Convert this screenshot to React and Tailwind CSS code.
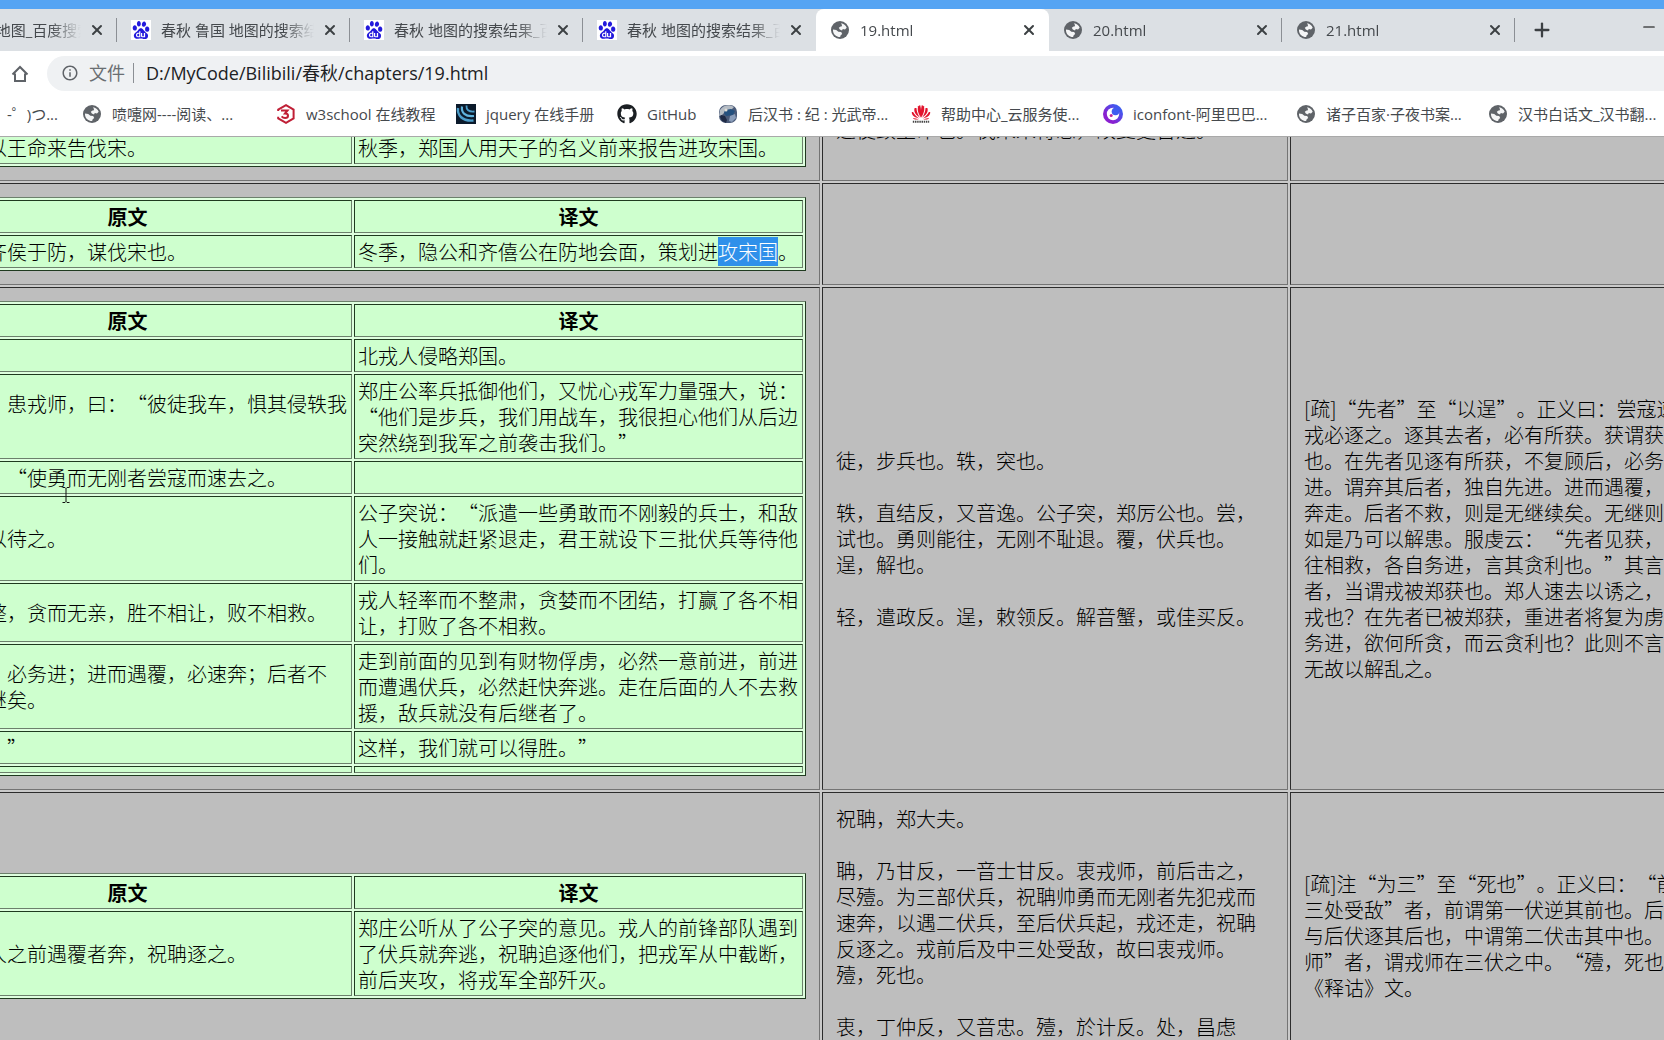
import { Fragment } from 'react'
import { SiBaidu } from 'react-icons/si'
import { FaGithub } from 'react-icons/fa'
import { MdInfoOutline } from 'react-icons/md'
import { X, Plus, Minus } from 'lucide-react'

const BaiduIcon = () => (
    <span className="flex h-5 w-5 shrink-0 items-center justify-center bg-white">
        <SiBaidu className="h-[18px] w-[18px] text-[#2319dc]" />
    </span>
)

const GlobeIcon = () => (
    <svg viewBox="0 0 20 20" className="h-5 w-5 shrink-0">
        <circle cx="10" cy="10" r="9" fill="#5f6368" />
        <path d="M11 3.200c2.600.3 4.800 2 5.700 4.500l-1.700 1.800-2.200-.4-.8 1.300-2.200-.9-1-1.700 1.800-1.200 1.400-.4-.2-1.400z" fill="#f4f5f6" />
        <path d="M3 9.500l3.200.6 2.200 1.600 2.800.4 1 1.800-1.500 1.400-.6 1.800c-3.600.1-6.600-2.500-7.100-6z" fill="#f4f5f6" />
    </svg>
)

const W3Icon = () => (
    <svg viewBox="0 0 20 20" className="h-5 w-5 shrink-0" fill="none" stroke="#c01f36" strokeWidth="2">
        <path d="M2.200 7V5.600L10 1.200l7.600 4.400v8.800L10 18.800l-7.800-4.400v-1.600" />
        <path d="M5 6.500h6.500L9 9.500c2 0 3 .9 3 2.200 0 1.400-1.200 2.300-2.900 2.300-1.500 0-2.600-.6-3.500-1.600" />
    </svg>
)

const JqueryIcon = () => (
    <svg viewBox="0 0 20 20" className="h-5 w-5 shrink-0" fill="none">
        <rect width="20" height="20" fill="#0b1a2b" />
        <path d="M2 4c-.8 7 4 13.500 15.500 12.500" stroke="#4b9cc9" strokeWidth="2.400" />
        <path d="M6 2.500c-.8 6 3 10.500 12 9.500" stroke="#5fb2dc" strokeWidth="2.200" />
        <path d="M10.500 1.500c-.4 4 2 6.600 8 6" stroke="#4b9cc9" strokeWidth="1.800" />
    </svg>
)

const EarthIcon = () => (
    <svg viewBox="0 0 20 20" className="h-5 w-5 shrink-0">
        <rect x="1" y="1" width="18" height="18" rx="7" fill="#4a5a78" />
        <path d="M2 6c3-5 9-6 14-3l-3 3-5 1-4 4-3 1z" fill="#b5bcc4" />
        <path d="M7 6l6-1 4 2-2 4-7 1-2-3z" fill="#24507e" />
        <path d="M3 11l4 1 2 4-1 3-4-2-2-4z" fill="#1f2a45" />
        <path d="M12 12l5-2 1 4-4 4-3-1z" fill="#8a9dba" />
        <circle cx="8" cy="6" r="1.500" fill="#e2dfd8" />
    </svg>
)

const HuaweiIcon = () => (
    <svg viewBox="0 0 22 20" className="h-5 w-5 shrink-0" fill="#e2142d">
        <path d="M10.700 14C8 9 6.500 5.500 8 1.500 8.500.8 9.500.5 10.200.5c1 4 1.200 9 .5 13.500z" />
        <path d="M11.300 14c2.700-5 4.200-8.500 2.700-12.500C13.500.8 12.500.5 11.800.5c-1 4-1.200 9-.5 13.500z" />
        <path d="M9.800 14.200C5 11 3 8 3.800 3.800c.7-.4 1.500-.5 2.200-.3C6.200 7.500 7.800 11.200 9.800 14.200z" />
        <path d="M12.200 14.200c4.800-3.200 6.800-6.200 6-10.400-.7-.4-1.500-.5-2.200-.3-.2 4-1.800 7.700-3.800 10.700z" />
        <path d="M9 15C4 14 1 12 .8 8.200c.5-.3 1-.4 1.500-.3C4 11 6.500 13.500 9 15z" />
        <path d="M13 15c5-1 8-3 8.200-6.800-.5-.3-1-.4-1.500-.3C18 11 15.500 13.500 13 15z" />
        <path d="M8.500 15.700c-3 .7-5.200.3-6.500-1.400 2 .4 4.300.9 6.500 1.400zM13.500 15.700c3 .7 5.200.3 6.500-1.400-2 .4-4.300.9-6.500 1.400z" />
        <path d="M2 18.500h18" stroke="#444" strokeWidth="2" strokeDasharray="1.600 .8" />
    </svg>
)

const IconfontIcon = () => (
    <svg viewBox="0 0 20 20" className="h-5 w-5 shrink-0">
        <defs>
            <linearGradient id="ring" x1="0" y1="1" x2="1" y2="0">
                <stop offset="0.3" stopColor="#8a1fd0" />
                <stop offset="0.8" stopColor="#3f5bf0" />
            </linearGradient>
        </defs>
        <circle cx="10" cy="10" r="10" fill="url(#ring)" />
        <circle cx="10" cy="10" r="6.200" fill="#fff" />
        <circle cx="12.500" cy="7.500" r="3.800" fill="#3f5bf0" />
        <circle cx="8.200" cy="11.400" r="1.500" fill="#c3269a" />
    </svg>
)

const HomeIcon = () => (
    <svg viewBox="0 0 20 20" className="h-5 w-5" fill="none" stroke="#5f6368" strokeWidth="2">
        <path d="M2.500 10.500 10 3l7.500 7.500M5 9.500v7.500h10V9.500" />
    </svg>
)

const tabs = [
    { title: '春秋 鲁国 地图_百度搜索', icon: BaiduIcon },
    { title: '春秋 鲁国 地图的搜索结果_百度图片搜索', icon: BaiduIcon },
    { title: '春秋 地图的搜索结果_百度图片搜索', icon: BaiduIcon },
    { title: '春秋 地图的搜索结果_百度图片搜索', icon: BaiduIcon },
    { title: '19.html', icon: GlobeIcon, active: true },
    { title: '20.html', icon: GlobeIcon },
    { title: '21.html', icon: GlobeIcon },
]

const bookmarks = [
    { label: '喷嚏网----阅读、...', icon: GlobeIcon, width: 'w-[194px]' },
    { label: 'w3school 在线教程', icon: W3Icon, width: 'w-[180px]' },
    { label: 'jquery 在线手册', icon: JqueryIcon, width: 'w-[161px]' },
    { label: 'GitHub', icon: () => <FaGithub className="h-5 w-5 shrink-0 text-[#1b1f23]" />, width: 'w-[101px]' },
    { label: '后汉书 : 纪 : 光武帝...', icon: EarthIcon, width: 'w-[193px]' },
    { label: '帮助中心_云服务使...', icon: HuaweiIcon, width: 'w-[192px]' },
    { label: 'iconfont-阿里巴巴...', icon: IconfontIcon, width: 'w-[193px]' },
    { label: '诸子百家·子夜书案...', icon: GlobeIcon, width: 'w-[192px]' },
    { label: '汉书白话文_汉书翻...', icon: GlobeIcon, width: 'w-[193px]' },
]

// Each record: paired original / translation rows, then the two commentary columns
const records = [
    {
        pairs: [['秋，郑人以王命来告伐宋。', '秋季，郑国人用天子的名义前来报告进攻宋国。']],
        notes: ['遣使致王命也。伐宋未得志，故复更告之。'],
        comment: '',
    },
    {
        pairs: [
            [
                '冬，公会齐侯于防，谋伐宋也。',
                <Fragment key="t">
                    冬季，隐公和齐僖公在防地会面，策划进<span className="bg-[#2f90ea] text-white">攻宋国</span>。
                </Fragment>,
            ],
        ],
        notes: [],
        comment: '',
    },
    {
        pairs: [
            ['北戎侵郑，', '北戎人侵略郑国。'],
            [
                '郑伯御之，患戎师，曰：“彼徒我车，惧其侵轶我也。”',
                <Fragment key="t">
                    郑庄公率兵抵御他们，又忧心戎军力量强大，说：
                    <wbr />
                    “他们是步兵，我们用战车，我很担心他们从后边突然绕到我军之前袭击我们。”
                </Fragment>,
            ],
            ['公子突曰：“使勇而无刚者尝寇而速去之。', ''],
            ['君为三覆以待之。', '公子突说：“派遣一些勇敢而不刚毅的兵士，和敌人一接触就赶紧退走，君王就设下三批伏兵等待他们。'],
            ['戎轻而不整，贪而无亲，胜不相让，败不相救。', '戎人轻率而不整肃，贪婪而不团结，打赢了各不相让，打败了各不相救。'],
            ['先者见获，必务进；进而遇覆，必速奔；后者不救，则无继矣。', '走到前面的见到有财物俘虏，必然一意前进，前进而遭遇伏兵，必然赶快奔逃。走在后面的人不去救援，敌兵就没有后继者了。'],
            ['乃可以逞。”', '这样，我们就可以得胜。”'],
            ['', ''],
        ],
        notes: [
            '徒，步兵也。轶，突也。',
            '轶，直结反，又音逸。公子突，郑厉公也。尝，试也。勇则能往，无刚不耻退。覆，伏兵也。逞，解也。',
            '轻，遣政反。逞，敕领反。解音蟹，或佳买反。',
        ],
        comment:
            '[疏]“先者”至“以逞”。正义曰：尝寇速去之，戎必逐之。逐其去者，必有所获。获谓获得财物也。在先者见逐有所获，不复顾后，必务于速前进。谓弃其后者，独自先进。进而遇覆，必当速奔走。后者不救，则是无继续矣。无继则易败，如是乃可以解患。服虔云：“先者见获，则不复往相救，各自务进，言其贪利也。”其言先见获者，当谓戎被郑获也。郑人速去以诱之，何得获戎也？在先者已被郑获，重进者将复为虏，各自务进，欲何所贪，而云贪利也？此则不言服义，无故以解乱之。',
    },
    {
        pairs: [['从之。戎人之前遇覆者奔，祝聃逐之。', '郑庄公听从了公子突的意见。戎人的前锋部队遇到了伏兵就奔逃，祝聃追逐他们，把戎军从中截断，前后夹攻，将戎军全部歼灭。']],
        notes: [
            '祝聃，郑大夫。',
            '聃，乃甘反，一音士甘反。衷戎师，前后击之，尽殪。为三部伏兵，祝聃帅勇而无刚者先犯戎而速奔，以遇二伏兵，至后伏兵起，戎还走，祝聃反逐之。戎前后及中三处受敌，故曰衷戎师。殪，死也。',
            '衷，丁仲反，又音忠。殪，於计反。处，昌虑反。',
        ],
        comment:
            '[疏]注“为三”至“死也”。正义曰：“前后及中三处受敌”者，前谓第一伏逆其前也。后谓祝聃与后伏逐其后也，中谓第二伏击其中也。“衷戎师”者，谓戎师在三伏之中。“殪，死也”，《释诂》文。',
    },
]

const Tab = ({ title, icon: Icon, active, divider }) => (
    <div
        className={
            active
                ? 'relative flex w-[233px] shrink-0 items-center rounded-t-lg bg-white pl-[14px] pr-3'
                : 'relative flex w-[233px] shrink-0 items-center pl-[14px] pr-3'
        }
    >
        <Icon />
        <span className="ml-[10px] flex-1 overflow-hidden whitespace-nowrap text-[15px] text-[#45494d] [mask-image:linear-gradient(to_right,black_80%,transparent)]">
            {title}
        </span>
        <button type="button" aria-label="关闭" className="ml-2 flex h-4 w-4 items-center justify-center text-[#3c4043]">
            <X size={16} strokeWidth={3} />
        </button>
        {divider && <span className="absolute right-0 top-[9px] h-6 w-px bg-[#8b8f94]" />}
    </div>
)

const cell = 'border border-t-[#1f3a1f] border-l-[#1f3a1f] border-b-[#6c806c] border-r-[#6c806c] bg-[#ceffce] p-[3px] pb-0.5'
const outerCell = 'border border-t-[#2c2c2c] border-l-[#2c2c2c] border-b-[#747474] border-r-[#747474] bg-[#bebebe] p-[13px] align-middle'

const PairTable = ({ pairs }) => (
    <table className="w-full table-fixed border-separate border-spacing-0.5 border border-t-[#6c806c] border-l-[#6c806c] border-b-[#1f3a1f] border-r-[#1f3a1f] bg-[#deffde]">
        <thead>
            <tr>
                <th className={`${cell} font-bold`}>原文</th>
                <th className={`${cell} font-bold`}>译文</th>
            </tr>
        </thead>
        <tbody>
            {pairs.map(([source, translation], i) => (
                <tr key={i}>
                    <td className={cell}>{source}</td>
                    <td className={cell}>{translation}</td>
                </tr>
            ))}
        </tbody>
    </table>
)

const App = () => {
    return (
        <div className="flex h-screen flex-col overflow-hidden bg-white font-['Open_Sans','Noto_Sans_CJK_SC',sans-serif] [text-spacing-trim:space-all]">
            <header className="shrink-0">
                <div className="h-[9px] bg-[#55a4f3]" />
                <div className="flex h-[42px] overflow-hidden bg-[#dce0e4]">
                    <div className="-ml-[116px] flex">
                        {tabs.map((tab, i) => (
                            <Tab key={i} {...tab} divider={!tab.active && !tabs[i + 1]?.active} />
                        ))}
                    </div>
                    <button type="button" aria-label="新标签页" className="ml-4 text-[#3c4043]">
                        <Plus size={22} strokeWidth={2.5} />
                    </button>
                    <button type="button" aria-label="最小化" className="mb-1.5 ml-auto mr-1.5 text-black">
                        <Minus size={18} strokeWidth={1.5} />
                    </button>
                </div>

                <div className="flex h-[45px] items-center pb-[5px] pt-[5px]">
                    <button type="button" aria-label="主页" className="ml-[10px] mr-[17px]">
                        <HomeIcon />
                    </button>
                    <div className="flex h-[35px] flex-1 items-center rounded-l-full bg-[#eff1f3] pb-px pl-[14px]">
                        <MdInfoOutline className="h-[18px] w-[18px] text-[#5f6368]" />
                        <label htmlFor="address" className="ml-[10px] text-lg text-[#6a6e72]">文件</label>
                        <span className="ml-2 mr-3 h-5 w-px bg-[#8b8f94]" />
                        <input
                            id="address"
                            defaultValue="D:/MyCode/Bilibili/春秋/chapters/19.html"
                            className="flex-1 bg-transparent text-lg text-[#202124] outline-none"
                        />
                    </div>
                </div>

                <nav className="flex h-[41px] items-center overflow-hidden border-b border-[#a9a9a9] pb-1 text-[15px] text-[#45494d]">
                    <a href="#" className="mr-6 flex w-[58px] shrink-0 justify-end whitespace-nowrap">哔哩哔哩 (゜-゜)つ...</a>
                    {bookmarks.map(({ label, icon: Icon, width }) => (
                        <a href="#" key={label} className={`${width} flex shrink-0 items-center whitespace-nowrap`}>
                            <Icon />
                            <span className="ml-[10px]">{label}</span>
                        </a>
                    ))}
                </nav>
            </header>

            <main className="relative min-h-0 flex-1 overflow-hidden bg-[#bebebe] font-['Noto_Sans_CJK_SC',sans-serif] text-xl/[26px] font-light text-black">
                <table className="-ml-[117px] -mt-[61px] w-[1876px] table-fixed border-separate border-spacing-0.5 border border-[#808080] bg-[#cacaca]">
                    <colgroup>
                        <col className="w-[934px]" />
                        <col className="w-[466px]" />
                        <col className="w-[466px]" />
                    </colgroup>
                    <tbody>
                        {records.map(({ pairs, notes, comment }, i) => (
                            <tr key={i}>
                                <td className={outerCell}>
                                    <PairTable pairs={pairs} />
                                </td>
                                <td className={outerCell}>
                                    <div className="flex flex-col gap-[26px]">
                                        {notes.map((note) => <p key={note}>{note}</p>)}
                                    </div>
                                </td>
                                <td className={outerCell}>{comment}</td>
                            </tr>
                        ))}
                    </tbody>
                </table>

                {/* text cursor */}
                <svg viewBox="0 0 8 18" className="absolute left-[62px] top-[349px] h-[18px] w-2" fill="none" stroke="#111">
                    <path d="M.5 1.500h2.500l1 1 1-1h2.500M4 2.500v13M.5 16.500h2.500l1-1 1 1h2.500" />
                </svg>
            </main>
        </div>
    )
}

export default App
